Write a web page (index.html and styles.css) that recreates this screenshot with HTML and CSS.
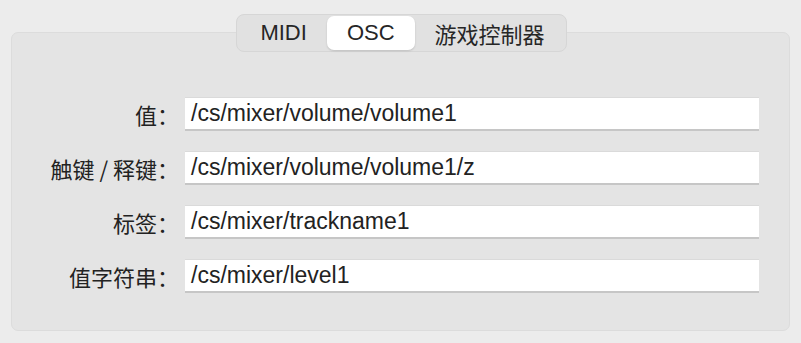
FILE: index.html
```html
<!DOCTYPE html>
<html lang="zh-CN">
<head>
  <meta charset="UTF-8" />
  <meta name="viewport" content="width=device-width, initial-scale=1.0"/>
  <title>OSC</title>
  <link rel="stylesheet" href="styles.css">
</head>
<body>

  <div class="tabs">
    <span class="tab">MIDI</span>
    <span class="tab active">OSC</span>
    <span class="tab">游戏控制器</span>
  </div>

  <section class="panel">
    <div class="form">
      <label class="label">值：</label>
      <div class="field">/cs/mixer/volume/volume1</div>

      <label class="label">触键 / 释键：</label>
      <div class="field">/cs/mixer/volume/volume1/z</div>

      <label class="label">标签：</label>
      <div class="field">/cs/mixer/trackname1</div>

      <label class="label">值字符串：</label>
      <div class="field">/cs/mixer/level1</div>
    </div>
  </section>

</body>
</html>
```

FILE: styles.css
```css
* { margin: 0; padding: 0; box-sizing: border-box; }
html, body {
  width: 801px;
  height: 343px;
  overflow: hidden;
  background: #ececec;
  color: #262626;
  font-family: "Liberation Sans", "Noto Sans CJK SC", sans-serif;
}
body {
  display: flex;
  flex-direction: column;
  align-items: center;
  padding-top: 14px;
}

/* segmented control */
.tabs {
  display: flex;
  height: 38px;
  padding: 1px;
  background: #e1e1e1;
  border: 1px solid #d6d6d6;
  border-radius: 8px;
  position: relative;
  z-index: 1;
  margin-bottom: -20px;
  margin-left: 2px;
}
.tab {
  display: flex;
  align-items: center;
  padding: 0 20px;
  font-size: 22px;
  border-radius: 7px;
  color: #262626;
}
.tab:first-child { padding-left: 22px; }
.tab.active {
  background: #fff;
  box-shadow: 0 1px 2px rgba(0,0,0,0.15);
}

/* panel */
.panel {
  align-self: stretch;
  margin: 0 11px;
  height: 299px;
  background: #e4e4e4;
  border: 1px solid #dcdcdc;
  border-radius: 7px;
  padding: 64px 30px 0 0;
}
.form {
  display: grid;
  grid-template-columns: 169px 1fr;
  column-gap: 4px;
  row-gap: 20px;
  align-items: center;
}
.label {
  text-align: right;
  font-size: 22px;
  font-family: "Noto Sans CJK SC", sans-serif;
  color: #222;
  margin-right: 2px;
}
.field {
  height: 34px;
  background: #fff;
  border-top: 1px solid #dadada;
  border-bottom: 2px solid #c6c6c6;
  padding: 0 6px;
  font-size: 23px;
  line-height: 31px;
  color: #222;
  white-space: nowrap;
}
```
